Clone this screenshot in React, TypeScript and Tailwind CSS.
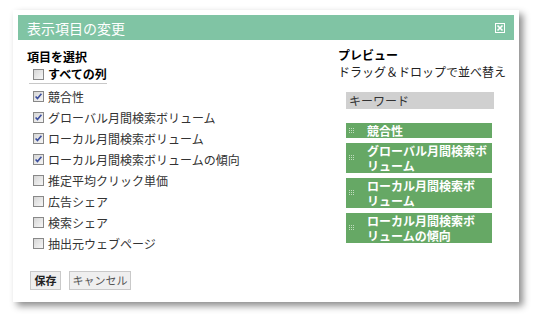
import type { ReactNode } from "react";

const FONT = { fontFamily: '"Noto Sans CJK JP", "Noto Sans", sans-serif' };

const columns = [
  { label: "競合性", checked: true },
  { label: "グローバル月間検索ボリューム", checked: true },
  { label: "ローカル月間検索ボリューム", checked: true },
  { label: "ローカル月間検索ボリュームの傾向", checked: true },
  { label: "推定平均クリック単価", checked: false },
  { label: "広告シェア", checked: false },
  { label: "検索シェア", checked: false },
  { label: "抽出元ウェブページ", checked: false },
];

// line breaks as the original wraps them
const preview = [
  ["競合性"],
  ["グローバル月間検索ボ", "リューム"],
  ["ローカル月間検索ボ", "リューム"],
  ["ローカル月間検索ボ", "リュームの傾向"],
];

function Box({ checked }: { checked: boolean }) {
  return (
    <svg width="11" height="11" viewBox="0 0 11 11" className="shrink-0">
      <defs>
        <linearGradient id="cbg" x1="0" y1="0" x2="1" y2="1">
          <stop offset="0" stopColor="#d4d4d4" />
          <stop offset="1" stopColor="#f8f8f8" />
        </linearGradient>
      </defs>
      <rect x="0.5" y="0.5" width="10" height="10" fill="url(#cbg)" stroke="#888888" />
      {checked && (
        <path d="M2.6 5.4 L4.5 7.6 L8.4 2.8" fill="none" stroke="#3c4f9e" strokeWidth="1.6" />
      )}
    </svg>
  );
}

function Row({ children, checked }: { children: ReactNode; checked: boolean }) {
  return (
    <div className="ml-[6px] flex h-[21px] items-center gap-[4px] text-[12px] text-[#333]">
      <Box checked={checked} />
      <span>{children}</span>
    </div>
  );
}

function Grip() {
  return (
    <svg width="6" height="6" viewBox="0 0 6 6" className="shrink-0 opacity-70">
      {[0, 2, 4].map((y) =>
        [0, 2, 4].map((x) => <rect key={`${x}-${y}`} x={x} y={y} width="1" height="1" fill="#e8f3e6" />)
      )}
    </svg>
  );
}

export default function App() {
  return (
    <div className="h-[320px] w-[533px] overflow-hidden bg-white pl-[13px] pt-[10px]" style={FONT}>
      <div className="flex h-[292px] w-[506px] flex-col bg-white p-[5px] shadow-[4px_4px_7px_rgba(0,0,0,0.45)]">
        <div className="flex h-[25px] shrink-0 items-center justify-between bg-[#80c4a4] pl-[9px] pr-[9px]">
          <span className="text-[14px] leading-none text-white">表示項目の変更</span>
          <svg width="10" height="10" viewBox="0 0 10 10">
            <rect x="0.5" y="0.5" width="9" height="9" fill="none" stroke="#ffffff" />
            <path d="M2.5 2.5 L7.5 7.5 M7.5 2.5 L2.5 7.5" stroke="#ffffff" strokeWidth="1.6" />
          </svg>
        </div>

        <div className="flex pl-[9px]">
          <div className="w-[311px] shrink-0 pt-[9px]">
            <div className="text-[12px] font-bold leading-[16px] text-black">項目を選択</div>
            <div className="ml-[2px] flex h-[19px] w-[78px] items-center gap-[4px] border-b border-[#c8c8c8] pl-[4px] text-[12px] font-bold text-black">
              <Box checked={false} />
              <span>すべての列</span>
            </div>
            <div className="pt-[2px]">
              {columns.map((c) => (
                <Row key={c.label} checked={c.checked}>
                  {c.label}
                </Row>
              ))}
            </div>
            <div className="mt-[17px] flex gap-[8px] pl-[3px]">
              <button
                type="button"
                className="h-[19px] w-[31px] border border-[#c9c9c9] bg-[#efefef] text-[11px] font-bold leading-none text-[#222]"
              >
                保存
              </button>
              <button
                type="button"
                className="h-[19px] w-[62px] border border-[#c9c9c9] bg-[#efefef] text-[11px] leading-none text-[#555]"
              >
                キャンセル
              </button>
            </div>
          </div>

          <div className="pt-[7px]">
            <div className="text-[12px] font-bold leading-[16px] text-black">プレビュー</div>
            <div className="mt-[1px] text-[12px] leading-[16px] text-[#222]">ドラッグ＆ドロップで並べ替え</div>
            <div className="ml-[8px] mt-[12px] flex h-[17px] w-[148px] items-center bg-[#d0d0d0] pl-[3px] text-[12px] text-[#333]">
              キーワード
            </div>
            <div className="ml-[8px] mt-[14px] flex w-[146px] flex-col gap-[5px]">
              {preview.map((lines) => (
                <div key={lines.join("")} className="flex items-center bg-[#66a865] pl-[3px]">
                  <Grip />
                  <div className="ml-[12px] whitespace-nowrap text-[12px] font-bold leading-[15px] text-white">
                    {lines.map((l) => (
                      <div key={l}>{l}</div>
                    ))}
                  </div>
                </div>
              ))}
            </div>
          </div>
        </div>
      </div>
    </div>
  );
}
